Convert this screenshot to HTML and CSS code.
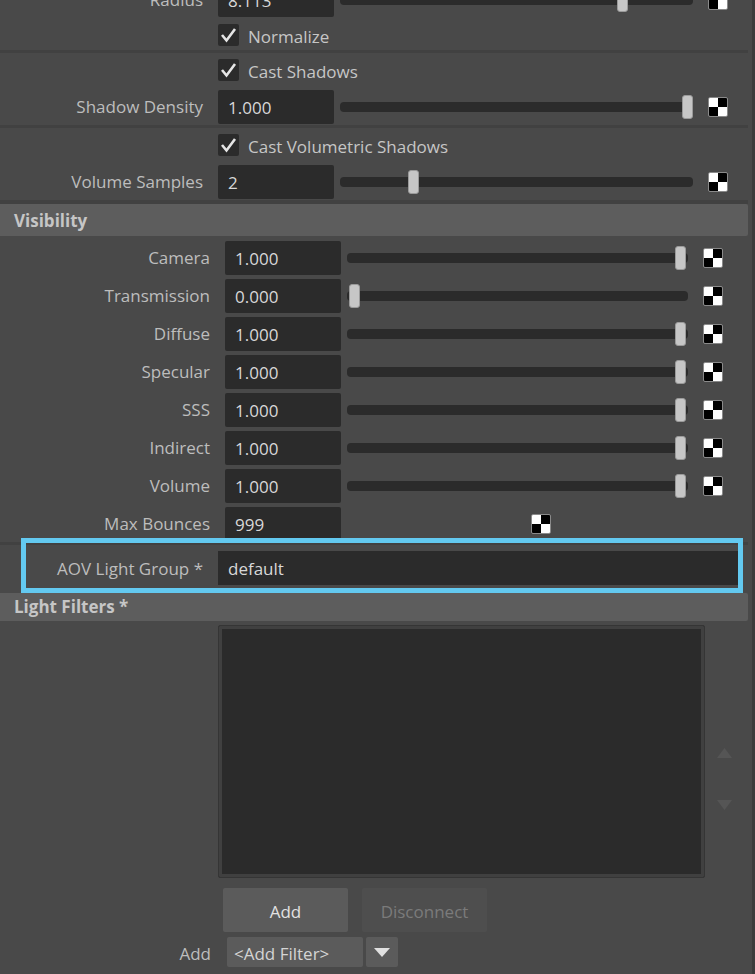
FILE: index.html
```html
<!DOCTYPE html>
<html lang="en">
<head>
    <meta charset="UTF-8">
    <meta name="viewport" content="width=device-width, initial-scale=1.0">
    <title>Light Attributes</title>
    <link rel="stylesheet" href="styles.css">
</head>
<body>
    <div class="panel">
        <!-- radius / normalize -->
        <div class="section first">
            <div class="row">
                <span class="label">Radius</span>
                <span class="field">8.113</span>
                <div class="slider"><span class="handle" style="left:277px"></span></div>
                <span class="map"></span>
            </div>
            <div class="check-row">
                <span class="box"><svg viewBox="0 0 21 22"><polyline points="4,11 8.5,16.5 17,5"/></svg></span>
                <span class="check-text">Normalize</span>
            </div>
        </div>
        <!-- shadows -->
        <div class="section">
            <div class="check-row">
                <span class="box"><svg viewBox="0 0 21 22"><polyline points="4,11 8.5,16.5 17,5"/></svg></span>
                <span class="check-text">Cast Shadows</span>
            </div>
            <div class="row">
                <span class="label">Shadow Density</span>
                <span class="field">1.000</span>
                <div class="slider"><span class="handle" style="left:342px"></span></div>
                <span class="map"></span>
            </div>
        </div>
        <div class="section last">
            <div class="check-row">
                <span class="box"><svg viewBox="0 0 21 22"><polyline points="4,11 8.5,16.5 17,5"/></svg></span>
                <span class="check-text">Cast Volumetric Shadows</span>
            </div>
            <div class="row">
                <span class="label">Volume Samples</span>
                <span class="field">2</span>
                <div class="slider"><span class="handle" style="left:68px"></span></div>
                <span class="map"></span>
            </div>
        </div>

        <div class="header">Visibility</div>
        <div class="section vis">
            <div class="row">
                <span class="label">Camera</span>
                <span class="field">1.000</span>
                <div class="slider"><span class="handle" style="left:328px"></span></div>
                <span class="map"></span>
            </div>
            <div class="row">
                <span class="label">Transmission</span>
                <span class="field">0.000</span>
                <div class="slider"><span class="handle" style="left:2px"></span></div>
                <span class="map"></span>
            </div>
            <div class="row">
                <span class="label">Diffuse</span>
                <span class="field">1.000</span>
                <div class="slider"><span class="handle" style="left:328px"></span></div>
                <span class="map"></span>
            </div>
            <div class="row">
                <span class="label">Specular</span>
                <span class="field">1.000</span>
                <div class="slider"><span class="handle" style="left:328px"></span></div>
                <span class="map"></span>
            </div>
            <div class="row">
                <span class="label">SSS</span>
                <span class="field">1.000</span>
                <div class="slider"><span class="handle" style="left:328px"></span></div>
                <span class="map"></span>
            </div>
            <div class="row">
                <span class="label">Indirect</span>
                <span class="field">1.000</span>
                <div class="slider"><span class="handle" style="left:328px"></span></div>
                <span class="map"></span>
            </div>
            <div class="row">
                <span class="label">Volume</span>
                <span class="field">1.000</span>
                <div class="slider"><span class="handle" style="left:328px"></span></div>
                <span class="map"></span>
            </div>
            <div class="row">
                <span class="label">Max Bounces</span>
                <span class="field">999</span>
                <span class="map lone"></span>
            </div>
        </div>

        <!-- highlighted row -->
        <div class="aov">
            <span class="label">AOV Light Group *</span>
            <span class="field wide">default</span>
        </div>

        <div class="header short">Light Filters *</div>
        <div class="filters">
            <div class="list"></div>
            <div class="arrows">
                <svg width="15" height="10" viewBox="0 0 15 10"><polygon points="7.5,0 15,10 0,10"/></svg>
                <svg width="15" height="10" viewBox="0 0 15 10"><polygon points="0,0 15,0 7.5,10"/></svg>
            </div>
        </div>
        <div class="buttons">
            <a href="#" class="btn">Add</a>
            <a href="#" class="btn off">Disconnect</a>
        </div>
        <div class="add-row">
            <span class="add-label">Add</span>
            <span class="combo">&lt;Add Filter&gt;</span>
            <span class="combo-arrow"><svg width="16" height="9" viewBox="0 0 16 9"><polygon points="0,0 16,0 8,9"/></svg></span>
        </div>
    </div>
    <div class="scrollbar"></div>
</body>
</html>
```

FILE: styles.css
```css
*{
    margin: 0;
    padding: 0;
    box-sizing: border-box;
}
body{
    display: flex;
    width: 755px;
    height: 974px;
    overflow: hidden;
    background-color: #494949;
    color: #bdbdbd;
    font-family: "Open Sans", "Noto Sans", sans-serif;
    font-size: 17px;
}
.panel{
    width: 752px;
    padding-right: 4px;
}
.scrollbar{
    width: 3px;
    background-color: #3c3c3c;
}
.section{
    border-bottom: 3px solid #414141;
}
.section.first{
    margin-top: -20px;
}
.section.last{
    border-bottom-width: 4px;
}
.row{
    display: flex;
    align-items: center;
    height: 38px;
    padding-top: 1px;
}
.label{
    width: 203px;
    margin-right: 15px;
    text-align: right;
    white-space: nowrap;
}
.field{
    width: 116px;
    height: 34px;
    padding-left: 10px;
    background-color: #2b2b2b;
    border-radius: 2px;
    color: #d8d8d8;
    line-height: 35px;
}
.slider{
    position: relative;
    width: 353px;
    height: 10px;
    margin-left: 6px;
    background-color: #2b2b2b;
    border-radius: 4px;
}
.handle{
    position: absolute;
    top: -7px;
    width: 11px;
    height: 24px;
    background-color: #c6c6c6;
    border: 1px solid #9a9a9a;
    border-radius: 3px;
}
.map{
    width: 20px;
    height: 20px;
    margin-left: 15px;
    border: 1px solid #8a8a8a;
    border-radius: 2px;
    background: conic-gradient(#000 0 25%, #fff 0 50%, #000 0 75%, #fff 0);
}
.map.lone{
    margin-left: 190px;
}
.check-row{
    display: flex;
    align-items: center;
    height: 32px;
    padding-left: 218px;
}
.section .check-row:first-child{
    height: 34px;
}
.section.first .check-row{
    height: 32px;
    padding-top: 2px;
}
.box{
    width: 21px;
    height: 22px;
    background-color: #2b2b2b;
    border-radius: 2px;
}
.box svg{
    display: block;
    width: 21px;
    height: 22px;
}
.box polyline{
    fill: none;
    stroke: #e6e6e6;
    stroke-width: 2.6;
}
.check-text{
    margin-left: 9px;
    padding-top: 2px;
    color: #c6c6c6;
}
.header{
    height: 32px;
    padding-left: 14px;
    background-color: #5d5d5d;
    border-radius: 0 2px 2px 0;
    color: #c6c6c6;
    font-weight: 700;
    line-height: 34px;
}
.header.short{
    height: 28px;
    line-height: 28px;
}
.vis{
    padding: 2px 0 0 7px;
}
.vis .slider{
    width: 341px;
}
.aov{
    position: relative;
    display: flex;
    align-items: center;
    height: 55px;
    margin: -7px 5px 0 21px;
    padding-top: 5px;
    border: 5px solid #63c9f0;
}
.aov .label{
    width: 177px;
}
.field.wide{
    flex: 1;
    border-radius: 0;
}
.filters{
    display: flex;
    margin-top: 4px;
    padding-left: 218px;
}
.list{
    width: 487px;
    height: 253px;
    background-color: #2b2b2b;
    border: 1px solid #353535;
    border-radius: 2px;
    box-shadow: inset 0 0 0 3px #404040;
}
.arrows{
    display: flex;
    flex-direction: column;
    gap: 42px;
    margin-left: 12px;
    padding-top: 123px;
}
.arrows polygon{
    fill: #555555;
}
.buttons{
    display: flex;
    gap: 14px;
    margin-top: 10px;
    padding-left: 223px;
}
.btn{
    width: 125px;
    height: 44px;
    background-color: #5b5b5b;
    border-radius: 2px;
    color: #e2e2e2;
    text-align: center;
    text-decoration: none;
    line-height: 47px;
}
.btn.off{
    background-color: #4e4e4e;
    color: #7b7b7b;
}
.add-row{
    display: flex;
    align-items: center;
    height: 30px;
    margin-top: 5px;
}
.add-label{
    width: 211px;
    margin-right: 16px;
    padding-top: 3px;
    text-align: right;
}
.combo{
    width: 136px;
    height: 30px;
    padding-left: 7px;
    background-color: #5b5b5b;
    border-radius: 2px;
    color: #d4d4d4;
    line-height: 34px;
}
.combo-arrow{
    display: flex;
    align-items: center;
    justify-content: center;
    width: 32px;
    height: 30px;
    margin-left: 3px;
    background-color: #5b5b5b;
    border-radius: 2px;
}
.combo-arrow polygon{
    fill: #e0e0e0;
}
```
